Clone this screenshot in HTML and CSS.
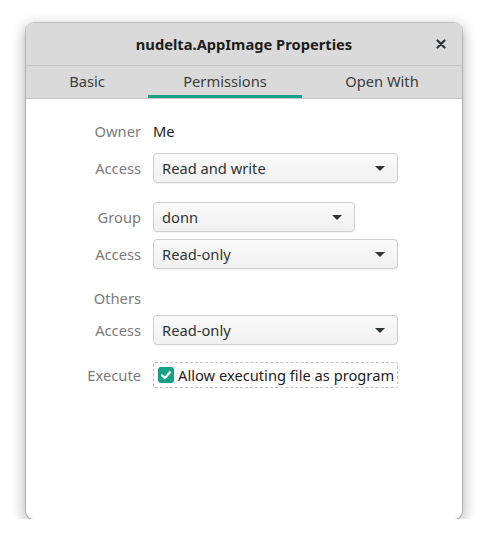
FILE: index.html
```html
<!DOCTYPE html>
<html>
<head>
<meta charset="utf-8">
<link rel="stylesheet" href="styles.css">
</head>
<body>
<div class="window">
  <div class="titlebar">
    <span class="title">nudelta.AppImage Properties</span>
    <span class="close">
      <svg width="10" height="10" viewBox="0 0 10 10"><path d="M1.5 1.5 L8.5 8.5 M8.5 1.5 L1.5 8.5" stroke="#2e3436" stroke-width="2.2" stroke-linecap="round"/></svg>
    </span>
  </div>
  <div class="tabs">
    <div class="tab tab-basic">Basic</div>
    <div class="tab tab-perm active">Permissions</div>
    <div class="tab tab-open">Open With</div>
  </div>
  <div class="content">
    <div class="row">
      <span class="label">Owner</span>
      <span class="value">Me</span>
    </div>
    <div class="row">
      <span class="label">Access</span>
      <div class="combo wide"><span>Read and write</span><span class="arrow"></span></div>
    </div>
    <div class="row section">
      <span class="label">Group</span>
      <div class="combo narrow"><span>donn</span><span class="arrow"></span></div>
    </div>
    <div class="row">
      <span class="label">Access</span>
      <div class="combo wide"><span>Read-only</span><span class="arrow"></span></div>
    </div>
    <div class="row section short">
      <span class="label">Others</span>
    </div>
    <div class="row">
      <span class="label">Access</span>
      <div class="combo wide"><span>Read-only</span><span class="arrow"></span></div>
    </div>
    <div class="row section exec">
      <span class="label">Execute</span>
      <div class="check">
        <span class="box">
          <svg width="16" height="16" viewBox="0 0 16 16"><rect x="0" y="0" width="16" height="16" rx="3" fill="#16a085"/><path d="M4 8.3 L6.8 11 L12 5.2" fill="none" stroke="#fff" stroke-width="2.2" stroke-linecap="round" stroke-linejoin="round"/></svg>
        </span>
        <span>Allow executing file as program</span>
      </div>
    </div>
  </div>
</div>
</body>
</html>
```

FILE: styles.css
```css
html, body {
  margin: 0;
  padding: 0;
  background: #ffffff;
}
body {
  font-family: "Noto Sans", "Open Sans", sans-serif;
  font-size: 14.7px;
  color: #2e3436;
}
.window {
  margin: 23px 0 0 26px;
  width: 436px;
  height: 496px;
  border-radius: 8px;
  background: #ffffff;
  box-shadow: 0 0 0 1px rgba(0,0,0,0.18), 0 4px 14px 2px rgba(0,0,0,0.28);
  overflow: hidden;
  display: flex;
  flex-direction: column;
}
.titlebar {
  height: 42px;
  background: #dadada;
  border-bottom: 1px solid #c4c4c4;
  display: flex;
  align-items: center;
  justify-content: center;
  position: relative;
}
.title {
  font-weight: bold;
  font-size: 14.7px;
  color: #1d1d1d;
}
.close {
  position: absolute;
  right: 16px;
  top: 16px;
  width: 10px;
  height: 10px;
  display: flex;
}
.tabs {
  height: 32px;
  background: #dadada;
  border-bottom: 1px solid #c4c4c4;
  display: flex;
}
.tab {
  flex: 0 0 auto;
  display: flex;
  align-items: center;
  justify-content: center;
  color: #3c3c3c;
  box-sizing: border-box;
  border-bottom: 3px solid transparent;
  padding-top: 1px;
}
.tab-basic { width: 122px; }
.tab-perm { width: 154px; }
.tab-open { width: 160px; }
.tab.active {
  border-bottom-color: #16a085;
}
.content {
  padding: 17px 0 0 0;
  display: flex;
  flex-direction: column;
  gap: 7px;
}
.row {
  display: flex;
  align-items: center;
  gap: 12px;
  height: 30px;
}
.row.section {
  margin-top: 12px;
}
.row.short {
  height: 20px;
}
.row.exec {
  margin-top: 8px;
}
.label {
  width: 115px;
  text-align: right;
  color: #7b7b7b;
}
.value {
  color: #1d1d1d;
}
.combo {
  box-sizing: border-box;
  height: 30px;
  border: 1px solid #cfcfcf;
  border-radius: 4px;
  background: linear-gradient(#fafafa, #f1f1f1);
  display: flex;
  align-items: center;
  justify-content: space-between;
  padding: 0 12px 0 8px;
  color: #2e3436;
  box-shadow: 0 1px 0 rgba(0,0,0,0.04);
}
.combo.wide {
  width: 245px;
}
.combo.narrow {
  width: 202px;
}
.arrow {
  width: 0;
  height: 0;
  border-left: 5px solid transparent;
  border-right: 5px solid transparent;
  border-top: 5px solid #2e3436;
}
.check {
  box-sizing: border-box;
  height: 26px;
  border: 1px dashed #c2c2c2;
  border-radius: 2px;
  display: flex;
  align-items: center;
  gap: 4px;
  padding: 0 3px 0 4px;
  color: #1d1d1d;
}
.box {
  display: flex;
}
```
